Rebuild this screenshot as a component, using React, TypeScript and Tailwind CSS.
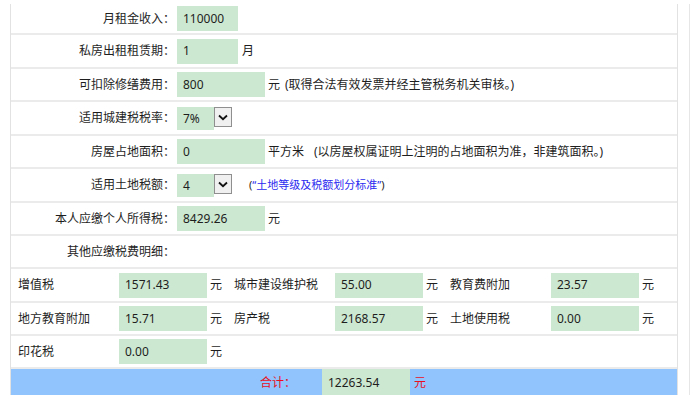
import React from "react";

const G = "bg-[#cde8d1]";

function Box({ w, children }: { w: string; children: React.ReactNode }) {
  return (
    <div className={`h-[25px] ${w} ${G} pl-[6px] flex items-center`}>{children}</div>
  );
}

function TopRow({ h, label, children }: { h: string; label: string; children?: React.ReactNode }) {
  return (
    <div className={`flex items-center border-b-2 border-[#ebebeb] ${h}`}>
      <div className="w-[164px] text-right whitespace-nowrap">{label}</div>
      <div className="ml-[2px] flex items-center whitespace-nowrap">{children}</div>
    </div>
  );
}

function Select({ v }: { v: string }) {
  return (
    <div className="flex items-start self-start mt-[1px]">
      <div className={`h-[23px] w-[37px] ${G} pl-[6px] flex items-center`}>{v}</div>
      <div className="h-[20px] w-[18px] border border-[#8f8f8f] bg-[#f0f0f0] flex items-center justify-center">
        <svg width="10" height="7" viewBox="0 0 10 7">
          <path d="M1 1.5 L5 5.2 L9 1.5" fill="none" stroke="#111" strokeWidth="1.8" />
        </svg>
      </div>
    </div>
  );
}

function Cell3({ items }: { items: [string, string][] }) {
  return (
    <>
      {items.map(([l, v], i) => (
        <React.Fragment key={i}>
          <div className={i === 0 ? "w-[108px] pl-[7px] whitespace-nowrap" : "w-[101px] whitespace-nowrap"}>{l}</div>
          <Box w="w-[88px]">{v}</Box>
          <div className="w-[27px] pl-[3px]">元</div>
        </React.Fragment>
      ))}
    </>
  );
}

export default function App() {
  return (
    <div className="relative w-[691px] h-[395px] overflow-hidden bg-white font-['Noto_Sans','Noto_Sans_CJK_SC',sans-serif] text-[12px] text-[#1e1e1e]">
      <div className="flex pt-[4px] h-full">
        <div className="ml-[10px] w-[668px] border-x border-[#e2e2e2] h-full">
          <TopRow h="h-[31px]" label="月租金收入：">
            <Box w="w-[61px]">110000</Box>
          </TopRow>
          <TopRow h="h-[34px]" label="私房出租租赁期：">
            <Box w="w-[61px]">1</Box>
            <span className="ml-[4px]">月</span>
          </TopRow>
          <TopRow h="h-[33px]" label="可扣除修缮费用：">
            <Box w="w-[88px]">800</Box>
            <span className="ml-[3px]">元</span>
            <span className="ml-[5px]">(取得合法有效发票并经主管税务机关审核。)</span>
          </TopRow>
          <TopRow h="h-[34px]" label="适用城建税税率：">
            <Select v="7%" />
          </TopRow>
          <TopRow h="h-[33px]" label="房屋占地面积：">
            <Box w="w-[88px]">0</Box>
            <span className="ml-[3px]">平方米</span>
            <span className="ml-[10px]">(以房屋权属证明上注明的占地面积为准，非建筑面积。)</span>
          </TopRow>
          <TopRow h="h-[34px]" label="适用土地税额：">
            <Select v="4" />
            <span className="ml-[17px] text-[11px]">
              (<span className="text-[#2a2af0]">“土地等级及税额划分标准”</span>)
            </span>
          </TopRow>
          <TopRow h="h-[33px]" label="本人应缴个人所得税：">
            <Box w="w-[88px]">8429.26</Box>
            <span className="ml-[3px]">元</span>
          </TopRow>
          <TopRow h="h-[33px]" label="其他应缴税费明细：" />
          <div className="flex items-center border-b-2 border-[#ebebeb] h-[34px]">
            <Cell3 items={[["增值税", "1571.43"], ["城市建设维护税", "55.00"], ["教育费附加", "23.57"]]} />
          </div>
          <div className="flex items-center border-b-2 border-[#ebebeb] h-[33px]">
            <Cell3 items={[["地方教育附加", "15.71"], ["房产税", "2168.57"], ["土地使用税", "0.00"]]} />
          </div>
          <div className="flex items-center border-b-2 border-[#ebebeb] h-[33px]">
            <Cell3 items={[["印花税", "0.00"]]} />
          </div>
          <div className="flex items-stretch bg-[#91c3fc] h-[28px]">
            <div className="w-[285px] flex items-center justify-end text-[#e8101e]">合计：</div>
            <div className={`ml-[26px] w-[88px] ${G} pl-[6px] flex items-center`}>12263.54</div>
            <div className="ml-[4px] flex items-center text-[#e8101e]">元</div>
          </div>
        </div>
        <div className="ml-[11px] w-px bg-[#e6e6e6] h-full" />
      </div>
    </div>
  );
}
